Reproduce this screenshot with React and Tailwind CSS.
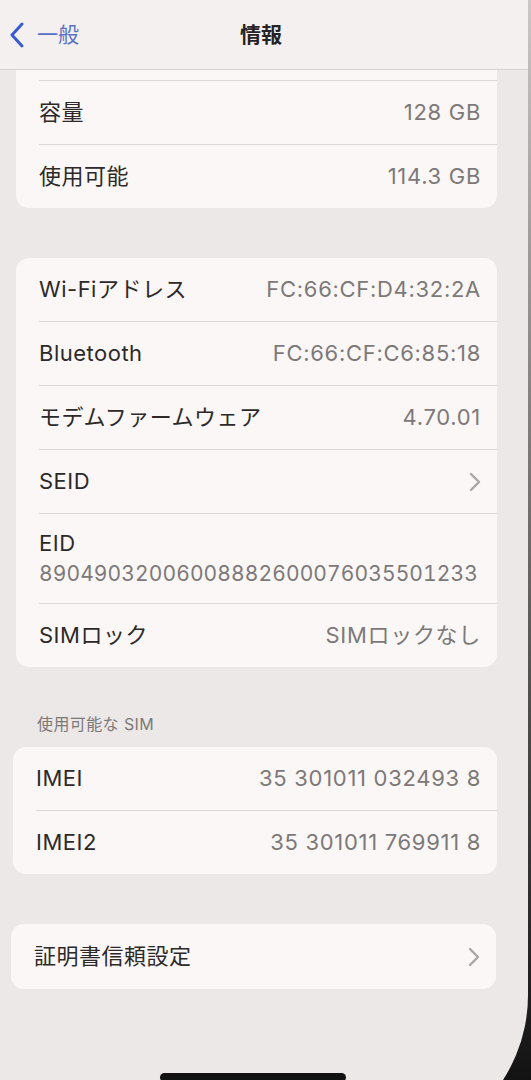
import { Fragment } from 'react';

const font = { fontFamily: '"Inter", "Noto Sans CJK JP", sans-serif' };

const Chevron = () => (
    <svg width="12" height="20" viewBox="0 0 12 20" fill="none">
        <polyline
            points="2,2 10,10 2,18"
            stroke="#aaa6a5"
            strokeWidth="2.4"
            strokeLinecap="round"
            strokeLinejoin="round"
        />
    </svg>
);

const Divider = () => <div className="ml-[23px] h-px bg-[#dcd8d7]" />;

const Row = ({ label, value, chevron }) => (
    <div className="flex h-[63px] items-center justify-between pl-[23px] pr-[16px]">
        <span className="text-[22px] tracking-[0.5px] text-[#2d2929]">{label}</span>
        {chevron ? (
            <Chevron />
        ) : (
            <span className="text-[22px] tracking-[0.7px] text-[#7d7979]">{value}</span>
        )}
    </div>
);

const Card = ({ rows, className }) => (
    <div className={`rounded-[13px] bg-[#faf7f6] ${className}`}>
        {rows.map((row, i) => (
            <Fragment key={row.label}>
                {i > 0 && <Divider />}
                {row.eid ? (
                    <div className="flex h-[89px] flex-col justify-center pl-[23px] pr-[16px]">
                        <span className="text-[22px] leading-[30px] tracking-[0.5px] text-[#2d2929]">
                            {row.label}
                        </span>
                        <span className="text-[21px] leading-[32px] tracking-[0.1px] text-[#7d7979] tabular-nums">
                            {row.value}
                        </span>
                    </div>
                ) : (
                    <Row {...row} />
                )}
            </Fragment>
        ))}
    </div>
);

const networkRows = [
    { label: 'Wi-Fiアドレス', value: 'FC:66:CF:D4:32:2A' },
    { label: 'Bluetooth', value: 'FC:66:CF:C6:85:18' },
    { label: 'モデムファームウェア', value: '4.70.01' },
    { label: 'SEID', chevron: true },
    { label: 'EID', value: '89049032006008882600076035501233', eid: true },
    { label: 'SIMロック', value: 'SIMロックなし' },
];

const simRows = [
    { label: 'IMEI', value: '35 301011 032493 8' },
    { label: 'IMEI2', value: '35 301011 769911 8' },
];

export default function App() {
    return (
        <div
            className="h-[1080px] w-[531px] overflow-hidden bg-linear-to-b from-[#cbc7c6] via-[#6e6a6a] to-[#141313]"
            style={font}
        >
            <div className="h-[1152px] w-[528px] overflow-hidden rounded-br-[157px] bg-[#ece8e7]">
                {/* nav bar */}
                <div className="relative flex h-[70px] items-center border-b border-[#d6d2d1] bg-[#f3f0ef]">
                    <div className="flex items-center gap-[12px] pl-[9px]">
                        <svg width="16" height="26" viewBox="0 0 16 26" fill="none">
                            <polyline
                                points="13,2 3,13 13,24"
                                stroke="#3b5bd2"
                                strokeWidth="3"
                                strokeLinecap="round"
                                strokeLinejoin="round"
                            />
                        </svg>
                        <span className="text-[21px] text-[#5a72c6]">一般</span>
                    </div>
                    <span className="absolute left-[240px] text-[21px] font-semibold text-[#262222]">
                        情報
                    </span>
                </div>

                {/* storage card, top scrolled under the nav bar */}
                <div className="ml-[16px] w-[481px] rounded-b-[13px] bg-[#faf7f6]">
                    <div className="h-[10px]" />
                    <Divider />
                    <Row label="容量" value="128 GB" />
                    <Divider />
                    <Row label="使用可能" value="114.3 GB" />
                </div>

                <Card rows={networkRows} className="ml-[16px] mt-[50px] w-[481px]" />

                <div className="ml-[37px] mt-[46px] h-[22px] text-[16px] leading-[22px] tracking-[0.4px] text-[#7d7979]">
                    使用可能な SIM
                </div>

                <Card rows={simRows} className="ml-[13px] mt-[12px] w-[484px]" />

                <Card
                    rows={[{ label: '証明書信頼設定', chevron: true }]}
                    className="ml-[11px] mt-[50px] w-[485px] [&>div]:h-[65px]"
                />

                <div className="ml-[160px] mt-[84px] h-[9px] w-[186px] rounded-full bg-[#111]" />
            </div>
        </div>
    );
}
